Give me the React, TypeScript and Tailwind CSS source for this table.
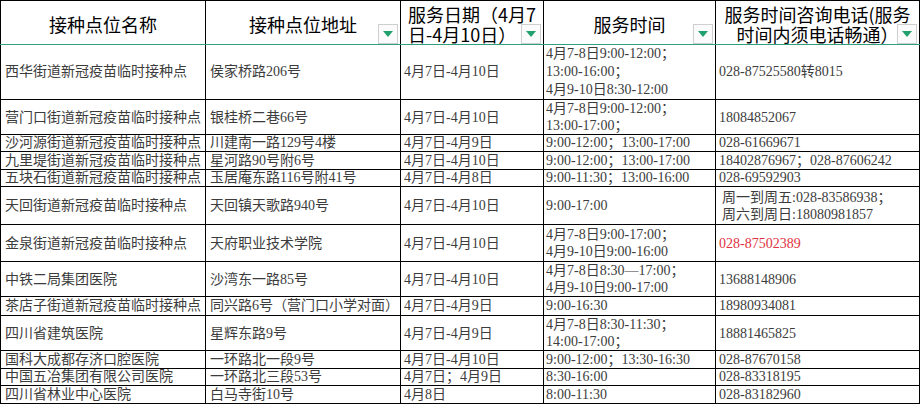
import React from 'react';

type Row = {
  h: string;
  lh: string;
  name: string;
  addr: string;
  date: string;
  time: string[];
  phone: string[];
  red?: boolean;
};

const rows: Row[] = [
  { h: 'h-[55px]', lh: 'leading-[18px]', name: '西华街道新冠疫苗临时接种点', addr: '侯家桥路206号', date: '4月7日-4月10日', time: ['4月7-8日9:00-12:00；', '13:00-16:00；', '4月9-10日8:30-12:00'], phone: ['028-87525580转8015'] },
  { h: 'h-[35px]', lh: 'leading-[17px]', name: '营门口街道新冠疫苗临时接种点', addr: '银桂桥二巷66号', date: '4月7日-4月10日', time: ['4月7-8日9:00-12:00；', '13:00-17:00；'], phone: ['18084852067'] },
  { h: 'h-[17px]', lh: 'leading-[16px]', name: '沙河源街道新冠疫苗临时接种点', addr: '川建南一路129号4楼', date: '4月7日-4月9日', time: ['9:00-12:00；13:00-17:00'], phone: ['028-61669671'] },
  { h: 'h-[18px]', lh: 'leading-[16px]', name: '九里堤街道新冠疫苗临时接种点', addr: '星河路90号附6号', date: '4月7日-4月10日', time: ['9:00-12:00；13:00-17:00'], phone: ['18402876967；028-87606242'] },
  { h: 'h-[17px]', lh: 'leading-[16px]', name: '五块石街道新冠疫苗临时接种点', addr: '玉居庵东路116号附41号', date: '4月7日-4月8日', time: ['9:00-11:30；13:00-16:00'], phone: ['028-69592903'] },
  { h: 'h-[38px]', lh: 'leading-[17px]', name: '天回街道新冠疫苗临时接种点', addr: '天回镇天歌路940号', date: '4月7日-4月10日', time: ['9:00-17:00'], phone: ['周一到周五:028-83586938；', '周六到周日:18080981857'] },
  { h: 'h-[37px]', lh: 'leading-[17px]', name: '金泉街道新冠疫苗临时接种点', addr: '天府职业技术学院', date: '4月7日-4月10日', time: ['4月7-8日9:00-17:00；', '4月9-10日9:00-16:00'], phone: ['028-87502389'], red: true },
  { h: 'h-[35px]', lh: 'leading-[17px]', name: '中铁二局集团医院', addr: '沙湾东一路85号', date: '4月7日-4月10日', time: ['4月7-8日8:30—17:00；', '4月9-10日9:00-17:00'], phone: ['13688148906'] },
  { h: 'h-[19px]', lh: 'leading-[16px]', name: '茶店子街道新冠疫苗临时接种点', addr: '同兴路6号（营门口小学对面）', date: '4月7日-4月9日', time: ['9:00-16:30'], phone: ['18980934081'] },
  { h: 'h-[35px]', lh: 'leading-[17px]', name: '四川省建筑医院', addr: '星辉东路9号', date: '4月7日-4月9日', time: ['4月7-8日8:30-11:30；', '14:00-17:00；'], phone: ['18881465825'] },
  { h: 'h-[18px]', lh: 'leading-[16px]', name: '国科大成都存济口腔医院', addr: '一环路北一段9号', date: '4月7日-4月10日', time: ['9:00-12:00；13:30-16:30'], phone: ['028-87670158'] },
  { h: 'h-[17px]', lh: 'leading-[16px]', name: '中国五冶集团有限公司医院', addr: '一环路北三段53号', date: '4月7日；4月9日', time: ['8:30-16:00'], phone: ['028-83318195'] },
  { h: 'h-[18px]', lh: 'leading-[16px]', name: '四川省林业中心医院', addr: '白马寺街10号', date: '4月8日', time: ['8:00-11:30'], phone: ['028-83182960'] },
];

function FilterButton() {
  return (
    <span className="absolute bottom-0 right-[2px] w-[20px] h-[20px] flex items-center justify-center bg-[#fbfbfb] border border-[#cfcfcf]">
      <svg width="10" height="6" viewBox="0 0 10 6">
        <polygon points="0,0 10,0 5,6" fill="#20a06c" />
      </svg>
    </span>
  );
}

const th = "relative p-0 h-[42px] border border-black border-b-[#2f9f7f] align-middle text-[18px] leading-[20px] font-normal text-black";
const td = "p-0 border-x border-b border-black align-middle whitespace-nowrap overflow-hidden";

function Lines({ items }: { items: string[] }) {
  return (
    <>
      {items.map((t, i) => (
        <div key={i}>{t}</div>
      ))}
    </>
  );
}

export default function App() {
  return (
    <div className="w-[921px] h-[404px] overflow-hidden bg-white">
      <table className="w-[920px] table-fixed border-collapse text-[14px] text-[#3c3c3c] [font-family:'Liberation_Serif','Noto_Sans_CJK_SC',serif]">
        <colgroup>
          <col className="w-[205px]" />
          <col className="w-[195px]" />
          <col className="w-[143px]" />
          <col className="w-[172px]" />
          <col className="w-[204px]" />
        </colgroup>
        <thead className="[font-family:'Noto_Sans_CJK_SC',sans-serif]">
          <tr>
            <th className={th + " text-center"}>
              <div className="pt-[3px]">接种点位名称</div>
            </th>
            <th className={th + " text-center"}>
              <div className="pt-[3px]">接种点位地址</div>
              <FilterButton />
            </th>
            <th className={th + " text-left"}>
              <div className="pl-[7px] pt-[3px]">
                服务日期（4月7
                <br />
                日-4月10日）
              </div>
              <FilterButton />
            </th>
            <th className={th + " text-center"}>
              <div className="pt-[3px]">服务时间</div>
              <FilterButton />
            </th>
            <th className={th + " text-center"}>
              <div className="pt-[3px]">
                服务时间咨询电话(服务
                <br />
                时间内须电话畅通）
              </div>
              <FilterButton />
            </th>
          </tr>
        </thead>
        <tbody>
          {rows.map((r, i) => (
            <tr key={i} className={r.h + ' ' + r.lh}>
              <td className={td + ' pl-[4px]'}>{r.name}</td>
              <td className={td + ' pl-[4px]'}>{r.addr}</td>
              <td className={td + ' pl-[3px]'}>{r.date}</td>
              <td className={td + ' pl-[2px]'}>
                <Lines items={r.time} />
              </td>
              <td className={td + (r.red ? ' pl-[3px] text-[#e0323f]' : r.phone.length > 1 ? ' pl-[6px]' : ' pl-[3px]')}>
                <Lines items={r.phone} />
              </td>
            </tr>
          ))}
          <tr className="h-[20px]">
            <td className={td}></td>
            <td className={td}></td>
            <td className={td}></td>
            <td className={td}></td>
            <td className={td}></td>
          </tr>
        </tbody>
      </table>
    </div>
  );
}
